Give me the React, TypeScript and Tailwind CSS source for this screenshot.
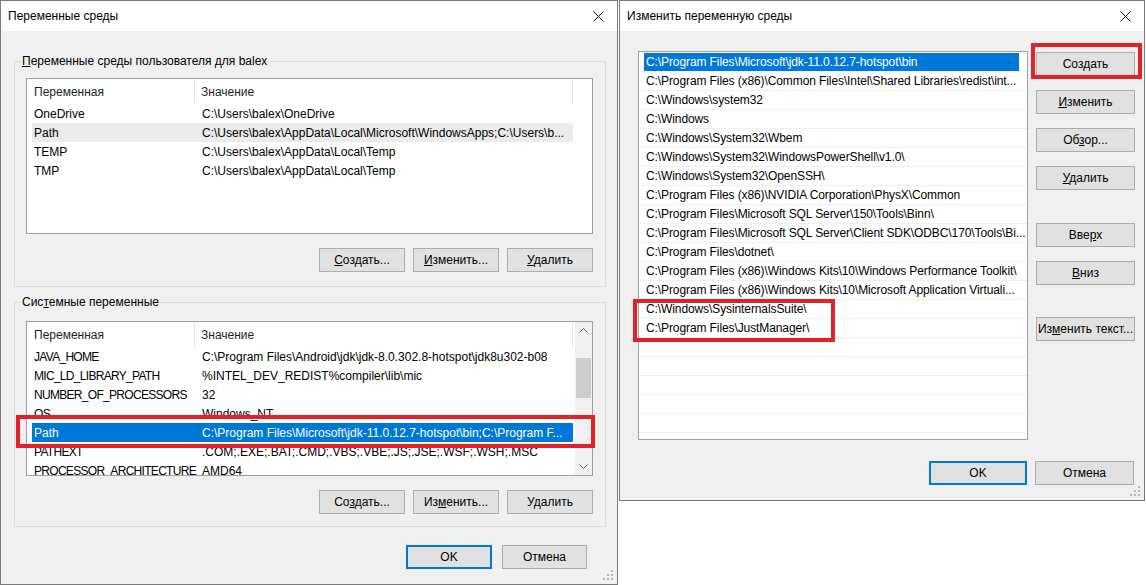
import React from 'react';

function CloseX() {
  return (
    <svg width="11" height="11" viewBox="0 0 11 11">
      <path d="M0.5 0.5L10.5 10.5M10.5 0.5L0.5 10.5" stroke="#1a1a1a" strokeWidth="1" />
    </svg>
  );
}

function Grip() {
  return (
    <svg width="11" height="11" viewBox="0 0 11 11" className="absolute right-[3px] bottom-[3px]">
      {[
        [8, 0],
        [8, 4],
        [4, 4],
        [8, 8],
        [4, 8],
        [0, 8],
      ].map(([x, y]) => (
        <rect key={`${x}-${y}`} x={x} y={y} width="2" height="2" fill="#b8b8b8" />
      ))}
    </svg>
  );
}

function Btn({ children, className = '', def = false }: { children: React.ReactNode; className?: string; def?: boolean }) {
  return (
    <div
      className={`h-[24px] flex items-center justify-center bg-[#e1e1e1] ${
        def ? 'border-2 border-[#0078d7]' : 'border border-[#adadad]'
      } ${className}`}
    >
      {children}
    </div>
  );
}

function TitleBar({ title }: { title: string }) {
  return (
    <div className="h-[30px] bg-white flex items-center justify-between pl-[7px] pr-[13px]">
      <span>{title}</span>
      <CloseX />
    </div>
  );
}

function Chevron({ up }: { up?: boolean }) {
  return (
    <svg width="9" height="5" viewBox="0 0 9 5">
      <path d={up ? 'M0.5 4.5L4.5 0.5L8.5 4.5' : 'M0.5 0.5L4.5 4.5L8.5 0.5'} stroke="#606060" fill="none" strokeWidth="1" />
    </svg>
  );
}

type Row = { name: string; value: string; state?: 'hover' | 'sel' };

function ListHeader() {
  return (
    <div className="flex h-[25px] text-[#1e1e1e]">
      <div className="w-[168px] h-full flex items-center pl-[7px] border-r border-[#e5e5e5]">Переменная</div>
      <div className="w-[378px] h-full flex items-center pl-[6px] border-r border-[#e5e5e5]">Значение</div>
    </div>
  );
}

function VarRows({ rows, tight = false }: { rows: Row[]; tight?: boolean }) {
  return (
    <>
      {rows.map((r) => (
        <div
          key={r.name}
          className={`ml-[5px] w-[541px] h-[19px] flex items-center whitespace-nowrap ${
            r.state === 'sel' ? 'bg-[#0078d7] text-white' : r.state === 'hover' ? 'bg-[#ebebeb]' : ''
          }`}
        >
          <div
            className={`w-[170px] pl-[2px] shrink-0 overflow-hidden ${
              tight && r.name === r.name.toUpperCase() ? 'tracking-[-0.7px]' : ''
            }`}
          >
            {r.name}
          </div>
          <div className="flex-1 overflow-hidden">{r.value}</div>
        </div>
      ))}
    </>
  );
}

const userVars: Row[] = [
  { name: 'OneDrive', value: 'C:\\Users\\balex\\OneDrive' },
  { name: 'Path', value: 'C:\\Users\\balex\\AppData\\Local\\Microsoft\\WindowsApps;C:\\Users\\b...', state: 'hover' },
  { name: 'TEMP', value: 'C:\\Users\\balex\\AppData\\Local\\Temp' },
  { name: 'TMP', value: 'C:\\Users\\balex\\AppData\\Local\\Temp' },
];

const sysVars: Row[] = [
  { name: 'JAVA_HOME', value: 'C:\\Program Files\\Android\\jdk\\jdk-8.0.302.8-hotspot\\jdk8u302-b08' },
  { name: 'MIC_LD_LIBRARY_PATH', value: '%INTEL_DEV_REDIST%compiler\\lib\\mic' },
  { name: 'NUMBER_OF_PROCESSORS', value: '32' },
  { name: 'OS', value: 'Windows_NT' },
  { name: 'Path', value: 'C:\\Program Files\\Microsoft\\jdk-11.0.12.7-hotspot\\bin;C:\\Program F...', state: 'sel' },
  { name: 'PATHEXT', value: '.COM;.EXE;.BAT;.CMD;.VBS;.VBE;.JS;.JSE;.WSF;.WSH;.MSC' },
  { name: 'PROCESSOR_ARCHITECTURE', value: 'AMD64' },
];

const paths = [
  'C:\\Program Files\\Microsoft\\jdk-11.0.12.7-hotspot\\bin',
  'C:\\Program Files (x86)\\Common Files\\Intel\\Shared Libraries\\redist\\int...',
  'C:\\Windows\\system32',
  'C:\\Windows',
  'C:\\Windows\\System32\\Wbem',
  'C:\\Windows\\System32\\WindowsPowerShell\\v1.0\\',
  'C:\\Windows\\System32\\OpenSSH\\',
  'C:\\Program Files (x86)\\NVIDIA Corporation\\PhysX\\Common',
  'C:\\Program Files\\Microsoft SQL Server\\150\\Tools\\Binn\\',
  'C:\\Program Files\\Microsoft SQL Server\\Client SDK\\ODBC\\170\\Tools\\Bi...',
  'C:\\Program Files\\dotnet\\',
  'C:\\Program Files (x86)\\Windows Kits\\10\\Windows Performance Toolkit\\',
  'C:\\Program Files (x86)\\Windows Kits\\10\\Microsoft Application Virtuali...',
  'C:\\Windows\\SysinternalsSuite\\',
  'C:\\Program Files\\JustManager\\',
  '',
  '',
  '',
  '',
  '',
  '',
];

function GroupBox({ legend, children, className = '' }: { legend: React.ReactNode; children: React.ReactNode; className?: string }) {
  return (
    <div className={`relative ml-[13px] w-[592px] border border-[#dcdcdc] ${className}`}>
      <span className="absolute -top-[9px] left-[6px] px-[1px] bg-[#f0f0f0] leading-[16px]">{legend}</span>
      {children}
    </div>
  );
}

export default function App() {
  return (
    <div className="relative flex w-[1146px] h-[585px] bg-white text-[12px] text-black font-['Liberation_Sans',Arial,sans-serif] overflow-hidden">
      {/* environment variables */}
      <div className="relative w-[618px] h-[585px] border border-[#7a7a7a] bg-[#f0f0f0] flex flex-col">
        <TitleBar title="Переменные среды" />

        <GroupBox
          className="mt-[30px] pt-[16px] pl-[11px] pb-[14px]"
          legend={
            <>
              <u>П</u>еременные среды пользователя для balex
            </>
          }
        >
          <div className="h-[156px] w-[567px] border border-[#a0a0a0] bg-white overflow-hidden">
            <ListHeader />
            <VarRows rows={userVars} />
          </div>
          <div className="mt-[14px] mr-[12px] flex justify-end gap-[8px]">
            <Btn className="w-[86px]">
              <span><u>С</u>оздать...</span>
            </Btn>
            <Btn className="w-[86px]">
              <span><u>И</u>зменить...</span>
            </Btn>
            <Btn className="w-[86px]">
              <span><u>У</u>далить</span>
            </Btn>
          </div>
        </GroupBox>

        <GroupBox
          className="mt-[15px] pt-[18px] pl-[11px] pb-[12px]"
          legend={
            <>
              Сис<u>т</u>емные переменные
            </>
          }
        >
          <div className="h-[155px] w-[567px] border border-[#a0a0a0] bg-white overflow-hidden flex">
            <div className="w-[548px]">
              <ListHeader />
              <VarRows rows={sysVars} tight />
            </div>
            <div className="w-[17px] h-full flex flex-col bg-[#f0f0f0]">
              <div className="h-[17px] flex items-center justify-center">
                <Chevron up />
              </div>
              <div className="flex-1">
                <div className="mt-[19px] mx-[1px] h-[40px] bg-[#cdcdcd]" />
              </div>
              <div className="h-[17px] flex items-center justify-center">
                <Chevron />
              </div>
            </div>
          </div>
          <div className="mt-[14px] mr-[12px] flex justify-end gap-[8px]">
            <Btn className="w-[86px]">
              <span>Со<u>з</u>дать...</span>
            </Btn>
            <Btn className="w-[86px]">
              <span>Из<u>м</u>енить...</span>
            </Btn>
            <Btn className="w-[86px]">
              <span>У<u>д</u>алить</span>
            </Btn>
          </div>
        </GroupBox>

        <div className="mt-[18px] pr-[30px] flex justify-end gap-[10px]">
          <Btn def className="w-[86px]">OK</Btn>
          <Btn className="w-[85px]">Отмена</Btn>
        </div>
        <Grip />
      </div>

      {/* edit path dialog */}
      <div className="relative ml-[1px] w-[526px] h-[501px] border border-[#7a7a7a] bg-[#f0f0f0] flex flex-col">
        <TitleBar title="Изменить переменную среды" />
        <div className="mt-[20px] pl-[18px] flex gap-[8px]">
          <div className="w-[390px] h-[389px] border border-[#a0a0a0] bg-white overflow-hidden pt-[1px]">
            {paths.map((p, i) => (
              <div key={i} className="h-[19px] border-b border-[#f0f0f0] flex items-center">
                <div
                  className={`ml-[5px] h-[18px] pl-[2px] flex items-center whitespace-nowrap overflow-hidden tracking-[-0.1px] ${
                    i === 0 ? 'w-[375px] bg-[#0078d7] text-white' : 'w-[383px]'
                  }`}
                >
                  {p}
                </div>
              </div>
            ))}
          </div>
          <div className="w-[99px] flex flex-col">
            <Btn className="mt-[1px] h-[23px]">
              <span>Соз<u>д</u>ать</span>
            </Btn>
            <Btn className="mt-[14px]">
              <span><u>И</u>зменить</span>
            </Btn>
            <Btn className="mt-[14px]">
              <span>Об<u>з</u>ор...</span>
            </Btn>
            <Btn className="mt-[14px]">
              <span><u>У</u>далить</span>
            </Btn>
            <Btn className="mt-[33px]">
              <span>Вве<u>р</u>х</span>
            </Btn>
            <Btn className="mt-[14px]">
              <span><u>В</u>низ</span>
            </Btn>
            <Btn className="mt-[32px]">
              <span>Из<u>м</u>енить текст...</span>
            </Btn>
          </div>
        </div>
        <div className="mt-[21px] pl-[309px] flex gap-[8px]">
          <Btn def className="w-[98px]">OK</Btn>
          <Btn className="w-[99px]">Отмена</Btn>
        </div>
        <Grip />
      </div>

      {/* red callouts */}
      <div className="absolute left-[16px] top-[415px] w-[579px] h-[33px] border-4 border-[#e1222b]" />
      <div className="absolute left-[1031px] top-[43px] w-[111px] h-[36px] border-4 border-[#e1222b]" />
      <div className="absolute left-[633px] top-[299px] w-[202px] h-[43px] border-4 border-[#e1222b]" />
    </div>
  );
}
